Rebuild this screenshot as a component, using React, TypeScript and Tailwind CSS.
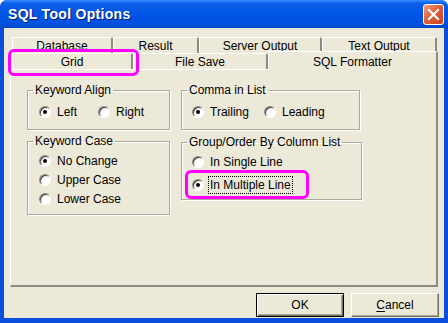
import type { ReactNode } from 'react';

const font = "font-['Liberation_Sans',Arial,sans-serif]";

function Radio({ checked, label, focused }: { checked?: boolean; label: string; focused?: boolean }) {
  return (
    <div className="flex h-[19px] items-center">
      <span className="relative flex h-[12px] w-[12px] items-center justify-center rounded-full border border-[#8a8a80] border-b-white border-r-white bg-[radial-gradient(circle_at_60%_60%,#ffffff_40%,#d8d6cc_100%)] shadow-[inset_1px_1px_0_#404040]">
        {checked && <span className="h-[4px] w-[4px] rounded-full bg-black" />}
      </span>
      <span
        className={
          'ml-[6px] text-[12px] leading-[14px] text-black ' +
          (focused ? 'outline outline-1 outline-dotted outline-black outline-offset-[1px]' : '')
        }
      >
        {label}
      </span>
    </div>
  );
}

function Group({
  title,
  className,
  inner,
  children,
}: {
  title: string;
  className: string;
  inner: string;
  children: ReactNode;
}) {
  return (
    <fieldset
      className={
        'border border-[#aca899] shadow-[inset_1px_1px_0_#ffffff,1px_1px_0_#ffffff] ' + className
      }
    >
      <legend className="ml-[5px] px-[2px] text-[12px] leading-[14px] text-black">{title}</legend>
      <div className={inner}>{children}</div>
    </fieldset>
  );
}

function BackTab({ label, w }: { label: string; w: string }) {
  return (
    <div
      className={
        'flex h-[16px] items-center justify-center rounded-t-[2px] border-l border-t border-white border-r-2 border-r-[#8d8b80] pt-[1px] text-[12px] text-black ' +
        w
      }
    >
      {label}
    </div>
  );
}

export default function App() {
  return (
    <div className={'relative flex h-[323px] w-[448px] flex-col overflow-hidden rounded-t-[7px] bg-[#0a4fdc] ' + font}>
      {/* title bar */}
      <div className="flex h-[28px] items-center justify-between bg-[linear-gradient(to_bottom,#3b8eff_0%,#0a5fea_12%,#0055e5_50%,#0051e0_85%,#0046c8_100%)] pl-[8px] pr-[4px]">
        <span className="text-[14px] font-bold tracking-[0.3px] text-white [text-shadow:1px_1px_0_#0a1e6a]">SQL Tool Options</span>
        <div className="flex h-[21px] w-[21px] items-center justify-center rounded-[3px] border border-white bg-[linear-gradient(135deg,#f0a080_0%,#e0603a_45%,#c8401c_100%)]">
          <svg width="13" height="13" viewBox="0 0 13 13">
            <path d="M2 2 L11 11 M11 2 L2 11" stroke="white" strokeWidth="2.2" strokeLinecap="square" />
          </svg>
        </div>
      </div>

      {/* body */}
      <div className="ml-[4px] mr-[4px] mb-[5px] flex flex-1 flex-col bg-[#ece9d8] pl-[6px] pr-[5px] pt-[9px]">
        {/* tab rows */}
        <div className="ml-[2px] flex">
          <BackTab label="Database" w="w-[101px]" />
          <BackTab label="Result" w="w-[86px]" />
          <BackTab label="Server Output" w="w-[123px]" />
          <BackTab label="Text Output" w="w-[115px]" />
        </div>
        <div className="ml-[2px] flex h-[16px] items-end">
          <BackTab label="Grid" w="w-[121px]" />
          <BackTab label="File Save" w="w-[135px]" />
          <div className="relative z-10 -mb-px flex h-[19px] w-[170px] items-start justify-center rounded-t-[2px] border-l border-t border-white border-r-2 border-r-[#8d8b80] bg-[#ece9d8] pt-[1px] text-[12px] text-black">
            SQL Formatter
          </div>
        </div>

        {/* panel */}
        <div className="mr-[1px] flex h-[218px] gap-[11px] border-l border-t border-white border-r-2 border-b-2 border-r-[#8d8b80] border-b-[#8d8b80] pl-[16px] pt-[13px]">
          <div className="flex w-[143px] flex-col gap-[4px]">
            <Group title="Keyword Align" className="h-[47px] w-[143px]" inner="pl-[11px] pt-[5px]">
              <div className="flex">
                <div className="w-[59px]">
                  <Radio checked label="Left" />
                </div>
                <Radio label="Right" />
              </div>
            </Group>
            <Group title="Keyword Case" className="h-[81px] w-[143px]" inner="pl-[11px] pt-[3px]">
              <Radio checked label="No Change" />
              <Radio label="Upper Case" />
              <Radio label="Lower Case" />
            </Group>
          </div>
          <div className="flex flex-col gap-[5px]">
            <Group title="Comma in List" className="h-[47px] w-[179px]" inner="pl-[10px] pt-[5px]">
              <div className="flex">
                <div className="w-[72px]">
                  <Radio checked label="Trailing" />
                </div>
                <Radio label="Leading" />
              </div>
            </Group>
            <Group title="Group/Order By Column List" className="h-[65px] w-[181px]" inner="pl-[10px] pt-[3px]">
              <Radio label="In Single Line" />
              <div className="mt-[4px]">
                <Radio checked focused label="In Multiple Line" />
              </div>
            </Group>
          </div>
        </div>

        {/* buttons */}
        <div className="mt-[6px] flex justify-end gap-[7px]">
          <button className="h-[24px] w-[88px] border border-black bg-[#ece9d8] text-[12px] text-black shadow-[inset_1px_1px_0_#ffffff,inset_-1px_-1px_0_#716f64,inset_-2px_-2px_0_#aca899]">
            OK
          </button>
          <button className="h-[24px] w-[88px] border border-white border-r-[#716f64] border-b-[#716f64] bg-[#ece9d8] text-[12px] text-black shadow-[inset_-1px_-1px_0_#aca899]">
            <span className="underline underline-offset-2">C</span>ancel
          </button>
        </div>
      </div>

      {/* annotation highlights */}
      <div className="absolute left-[8px] top-[49px] h-[27px] w-[131px] rounded-[6px] border-[3px] border-[#ff00ff]" />
      <div className="absolute left-[185px] top-[170px] h-[29px] w-[124px] rounded-[6px] border-[3px] border-[#ff00ff]" />
    </div>
  );
}
